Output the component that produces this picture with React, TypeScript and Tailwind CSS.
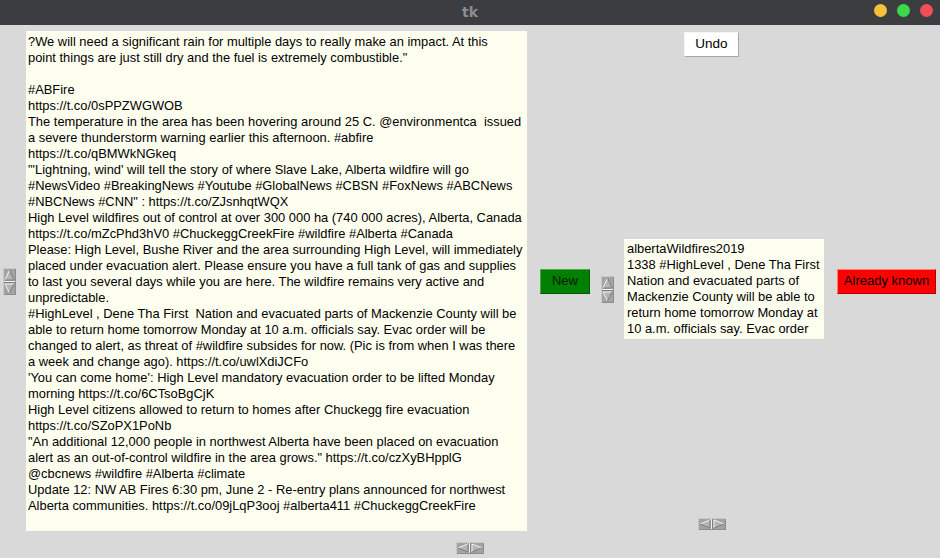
const leftLines = [
  '?We will need a significant rain for multiple days to really make an impact. At this',
  'point things are just still dry and the fuel is extremely combustible."',
  '',
  '#ABFire',
  'https://t.co/0sPPZWGWOB',
  'The temperature in the area has been hovering around 25 C. @environmentca  issued',
  'a severe thunderstorm warning earlier this afternoon. #abfire',
  'https://t.co/qBMWkNGkeq',
  '"\'Lightning, wind\' will tell the story of where Slave Lake, Alberta wildfire will go',
  '#NewsVideo #BreakingNews #Youtube #GlobalNews #CBSN #FoxNews #ABCNews',
  '#NBCNews #CNN" : https://t.co/ZJsnhqtWQX',
  'High Level wildfires out of control at over 300 000 ha (740 000 acres), Alberta, Canada',
  'https://t.co/mZcPhd3hV0 #ChuckeggCreekFire #wildfire #Alberta #Canada',
  'Please: High Level, Bushe River and the area surrounding High Level, will immediately',
  'placed under evacuation alert. Please ensure you have a full tank of gas and supplies',
  'to last you several days while you are here. The wildfire remains very active and',
  'unpredictable.',
  '#HighLevel , Dene Tha First  Nation and evacuated parts of Mackenzie County will be',
  'able to return home tomorrow Monday at 10 a.m. officials say. Evac order will be',
  'changed to alert, as threat of #wildfire subsides for now. (Pic is from when I was there',
  'a week and change ago). https://t.co/uwlXdiJCFo',
  "'You can come home': High Level mandatory evacuation order to be lifted Monday",
  'morning https://t.co/6CTsoBgCjK',
  'High Level citizens allowed to return to homes after Chuckegg fire evacuation',
  'https://t.co/SZoPX1PoNb',
  '"An additional 12,000 people in northwest Alberta have been placed on evacuation',
  'alert as an out-of-control wildfire in the area grows." https://t.co/czXyBHpplG',
  '@cbcnews #wildfire #Alberta #climate',
  'Update 12: NW AB Fires 6:30 pm, June 2 - Re-entry plans announced for northwest',
  'Alberta communities. https://t.co/09jLqP3ooj #alberta411 #ChuckeggCreekFire',
]

const rightLines = [
  'albertaWildfires2019',
  '1338 #HighLevel , Dene Tha First',
  'Nation and evacuated parts of',
  'Mackenzie County will be able to',
  'return home tomorrow Monday at',
  '10 a.m. officials say. Evac order',
]

const font = "font-['Liberation_Sans',Arial,sans-serif]"

// tk-style spin arrows, up over down
function VArrows() {
  return (
    <svg width="13" height="27" viewBox="0 0 13 27" className="block" shapeRendering="crispEdges">
      <rect x="0" y="0" width="13" height="27" fill="#a3a3a3" />
      <path d="M0.5 26.5 V0.5 H12.5" fill="none" stroke="#c9c9c9" />
      <path d="M12.5 0.5 V26.5 H0.5" fill="none" stroke="#8c8c8c" />
      <path d="M6.5 2 L11 12 L2 12 Z" fill="#b4b4b4" />
      <path d="M2 12 L6.5 2" fill="none" stroke="#f4f4f4" shapeRendering="auto" />
      <path d="M6.5 2 L11 12 H2" fill="none" stroke="#7e7e7e" shapeRendering="auto" />
      <line x1="1" y1="13.5" x2="12" y2="13.5" stroke="#f4f4f4" />
      <line x1="1" y1="14.5" x2="12" y2="14.5" stroke="#7e7e7e" />
      <path d="M2 16 L11 16 L6.5 25 Z" fill="#b4b4b4" />
      <path d="M6.5 25 L2 16 H11" fill="none" stroke="#f4f4f4" shapeRendering="auto" />
      <path d="M11 16 L6.5 25" fill="none" stroke="#7e7e7e" shapeRendering="auto" />
    </svg>
  )
}

function HArrows() {
  return (
    <svg width="28" height="12" viewBox="0 0 28 12" className="block" shapeRendering="crispEdges">
      <rect x="0" y="0" width="28" height="12" fill="#a3a3a3" />
      <path d="M0.5 11.5 V0.5 H27.5" fill="none" stroke="#c9c9c9" />
      <path d="M27.5 0.5 V11.5 H0.5" fill="none" stroke="#8c8c8c" />
      <path d="M2 6 L12 2 L12 10 Z" fill="#b4b4b4" />
      <path d="M12 2 L2 6" fill="none" stroke="#f4f4f4" shapeRendering="auto" />
      <path d="M2 6 L12 10 V2" fill="none" stroke="#7e7e7e" shapeRendering="auto" />
      <line x1="13.5" y1="1" x2="13.5" y2="11" stroke="#f4f4f4" />
      <line x1="14.5" y1="1" x2="14.5" y2="11" stroke="#7e7e7e" />
      <path d="M16 2 L26 6 L16 10 Z" fill="#b4b4b4" />
      <path d="M16 10 V2 L26 6" fill="none" stroke="#f4f4f4" shapeRendering="auto" />
      <path d="M26 6 L16 10" fill="none" stroke="#7e7e7e" shapeRendering="auto" />
    </svg>
  )
}

function TextBox({ lines, className }: { lines: string[]; className: string }) {
  return (
    <div className={`overflow-hidden bg-[#fffff0] leading-[16px] text-black ${className}`}>
      {lines.map((line, i) => (
        <div key={i} className="h-[16px] whitespace-pre">
          {line}
        </div>
      ))}
    </div>
  )
}

function TitleBar() {
  return (
    <div className="relative flex h-[25px] items-center justify-center bg-[#3c3d41]">
      <span className="text-[14px] font-bold text-[#8e8e8e] font-['DejaVu_Sans',sans-serif]">tk</span>
      <div className="absolute right-[7px] top-[4px] flex gap-[10px]">
        <span className="h-[13px] w-[13px] rounded-full bg-[#f4c23a]" />
        <span className="h-[13px] w-[13px] rounded-full bg-[#3ad84a]" />
        <span className="h-[13px] w-[13px] rounded-full bg-[#f04f58]" />
      </div>
    </div>
  )
}

export default function App() {
  return (
    <div className={`h-[558px] w-[940px] overflow-hidden bg-[#d9d9d9] ${font}`}>
      <TitleBar />
      <div className="flex h-[515px]">
        <div className="flex h-[506px] w-[26px] items-center pl-[3px] pt-[6px]">
          <VArrows />
        </div>
        <TextBox lines={leftLines} className="mt-[6px] h-[500px] w-[501px] pl-[2px] pt-[3px] text-[12.9px]" />
        <div className="ml-[13px] flex h-[506px] items-center pt-[6px]">
          <button className="h-[25px] w-[50px] border border-t-[#4ca64c] border-l-[#4ca64c] border-b-[#005a00] border-r-[#005a00] bg-[#008000] text-[13px] text-[#0a1a0a]">
            New
          </button>
        </div>
        <div className="ml-[11px] mt-[251px]">
          <VArrows />
        </div>
        <div className="ml-[10px] flex w-[200px] flex-col">
          <button className="ml-[60px] mt-[7px] h-[25px] w-[55px] border border-t-[#f4f4f4] border-l-[#f4f4f4] border-b-[#a8a8a8] border-r-[#a8a8a8] bg-white text-[13.5px] text-black">
            Undo
          </button>
          <TextBox lines={rightLines} className="mt-[182px] h-[100px] w-[200px] pl-[3px] pt-[2px] text-[12.9px]" />
          <div className="ml-[74px] mt-[179px]">
            <HArrows />
          </div>
        </div>
        <div className="ml-[13px] flex h-[506px] items-center pt-[6px]">
          <button className="h-[25px] w-[99px] border border-t-[#ff7a7a] border-l-[#ff7a7a] border-b-[#b00000] border-r-[#b00000] bg-[#ff0000] text-[13px] text-black">
            Already known
          </button>
        </div>
      </div>
      <div className="flex justify-center pt-[2px]">
        <HArrows />
      </div>
    </div>
  )
}
